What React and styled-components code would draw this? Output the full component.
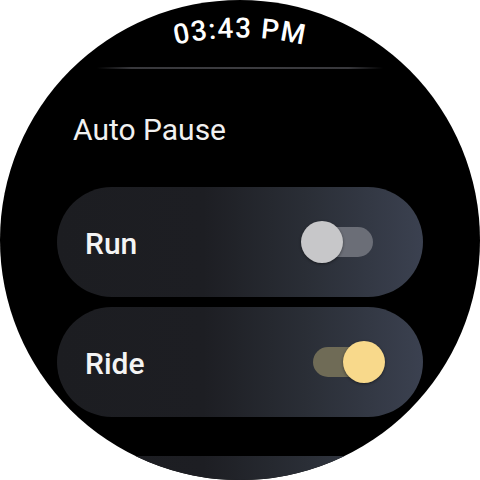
import React from "react";
import styled, { createGlobalStyle } from "styled-components";

const Global = createGlobalStyle`
  html, body { margin: 0; padding: 0; background: #ffffff; }
  body { font-family: Roboto, "Noto Sans", sans-serif; }
`;

const Watch = styled.div`
  width: 480px;
  height: 480px;
  border-radius: 50%;
  background: #000;
  overflow: hidden;
  display: flex;
  flex-direction: column;
`;

const TimeArc = styled.svg`
  display: block;
  width: 480px;
  height: 60px;
  flex: none;
`;

const Divider = styled.div`
  align-self: center;
  margin-top: 7px;
  width: 286px;
  height: 2px;
  flex: none;
  background: linear-gradient(90deg, rgba(58,58,62,0) 0%, #38383c 12%, #3c3c40 50%, #38383c 88%, rgba(58,58,62,0) 100%);
`;

const Title = styled.div`
  margin: 44px 0 0 73px;
  font-size: 30px;
  line-height: 34px;
  font-weight: 400;
  color: #f1f1f1;
  flex: none;
`;

const ChipList = styled.div`
  display: flex;
  flex-direction: column;
  gap: 10px;
  margin: ${p => p.$top}px 0 0 57px;
  flex: none;
`;

const Chip = styled.div`
  width: 366px;
  height: 110px;
  box-sizing: border-box;
  border-radius: 55px;
  background: linear-gradient(90deg, #1c1d21 0%, #1d1e23 40%, #2a2e36 68%, #3b4150 100%);
  display: flex;
  align-items: center;
  justify-content: space-between;
  padding: 3px 38px 0 28px;
`;

const Label = styled.span`
  font-size: 30px;
  line-height: 34px;
  font-weight: 500;
  color: #f4f4f4;
`;

const Toggle = styled.div`
  position: relative;
  width: 84px;
  height: 44px;
  display: flex;
  align-items: center;
  justify-content: center;
  margin-top: -3px;
`;

const Track = styled.div`
  width: 60px;
  height: 30px;
  border-radius: 15px;
  background: ${p => (p.$on ? "#6f6b56" : "#6b6e77")};
`;

const Thumb = styled.div`
  position: absolute;
  top: 1px;
  left: ${p => (p.$on ? "42px" : "0px")};
  width: 42px;
  height: 42px;
  border-radius: 50%;
  background: ${p => (p.$on ? "#f8d98b" : "#c7c7c9")};
  box-shadow: 0 1px 3px rgba(0, 0, 0, 0.45);
`;

function Switch({ on }) {
  return (
    <Toggle>
      <Track $on={on} />
      <Thumb $on={on} />
    </Toggle>
  );
}

export default function App() {
  return (
    <>
      <Global />
      <Watch>
        <TimeArc viewBox="0 0 480 60">
          <defs>
            <path id="timeArc" d="M 60 103 A 280 280 0 0 1 420 103" fill="none" />
          </defs>
          <text
            fill="#ffffff"
            fontFamily="Roboto, sans-serif"
            fontSize="28"
            fontWeight="500"
            letterSpacing="1.2"
            textAnchor="middle"
          >
            <textPath href="#timeArc" startOffset="50%">03:43 PM</textPath>
          </text>
        </TimeArc>
        <Divider />
        <Title>Auto Pause</Title>
        <ChipList $top={40}>
          <Chip>
            <Label>Run</Label>
            <Switch on={false} />
          </Chip>
          <Chip>
            <Label>Ride</Label>
            <Switch on={true} />
          </Chip>
        </ChipList>
        <ChipList $top={39}>
          <Chip />
        </ChipList>
      </Watch>
    </>
  );
}
